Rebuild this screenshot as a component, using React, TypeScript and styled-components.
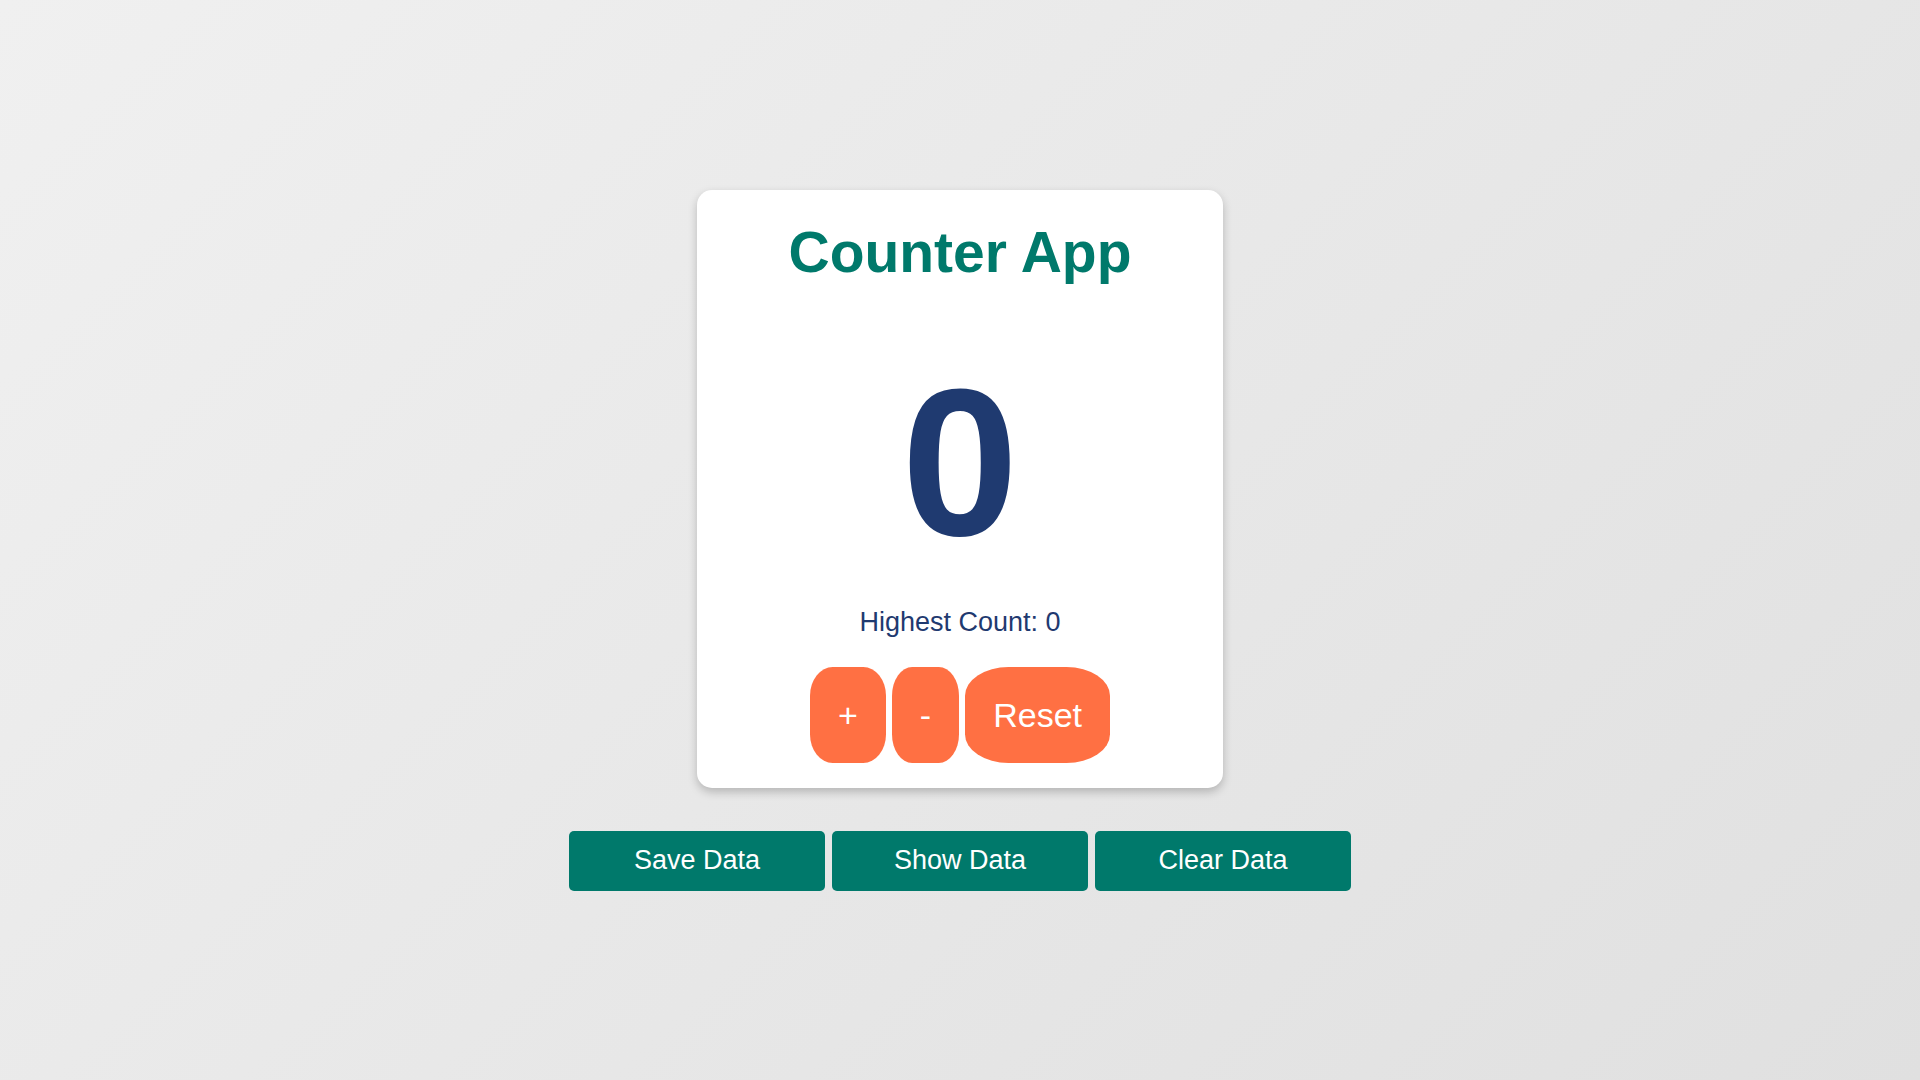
import { FC, useState } from "react";
import styled, { createGlobalStyle } from "styled-components";

const GlobalStyle = createGlobalStyle`
  html, body {
    margin: 0;
    padding: 0;
  }

  body {
    font-family: "Liberation Sans", Arial, sans-serif;
    background: linear-gradient(135deg, #f0f0f0, #e0e0e0);
    min-height: 100vh;
  }
`;

const StyledPage = styled.div`
  height: 100vh;
  display: flex;
  flex-direction: column;
  align-items: center;
  justify-content: center;
`;

const StyledCard = styled.div`
  box-sizing: border-box;
  width: 526px;
  padding: 30px 20px 25px;
  background-color: #ffffff;
  border-radius: 15px;
  box-shadow: 0 4px 10px rgba(0, 0, 0, 0.22);
  display: flex;
  flex-direction: column;
  align-items: center;
  text-align: center;
`;

const StyledTitle = styled.h1`
  margin: 0;
  font-size: 57px;
  line-height: 64px;
  font-weight: bold;
  color: #00796b;
`;

const StyledCount = styled.div`
  margin-top: 50px;
  font-size: 210px;
  line-height: 257px;
  font-weight: bold;
  color: #1f3a70;
`;

const StyledHighest = styled.p`
  margin: 16px 0 0;
  font-size: 27px;
  line-height: 31px;
  color: #1f3a70;
`;

const StyledControls = styled.div`
  margin-top: 29px;
  display: flex;
  gap: 6px;
`;

const StyledCountButton = styled.button`
  padding: 28px;
  border: none;
  border-radius: 30%;
  background-color: #ff7043;
  color: #ffffff;
  font-family: inherit;
  font-size: 34px;
  line-height: 40px;
  cursor: pointer;
`;

const StyledDataBar = styled.div`
  margin-top: 43px;
  display: flex;
  gap: 7px;
`;

const StyledDataButton = styled.button`
  width: 256px;
  height: 60px;
  border: none;
  border-radius: 5px;
  background-color: #00796b;
  color: #ffffff;
  font-family: inherit;
  font-size: 27px;
  cursor: pointer;
`;

const App: FC = () => {
  const [count, setCount] = useState(0);
  const [highest, setHighest] = useState(0);

  const increment = () => {
    const next = count + 1;
    setCount(next);
    if (next > highest) setHighest(next);
  };

  return (
    <>
      <GlobalStyle />
      <StyledPage>
        <StyledCard>
          <StyledTitle>Counter App</StyledTitle>
          <StyledCount>{count}</StyledCount>
          <StyledHighest>Highest Count: {highest}</StyledHighest>
          <StyledControls>
            <StyledCountButton onClick={increment}>+</StyledCountButton>
            <StyledCountButton onClick={() => setCount(count - 1)}>-</StyledCountButton>
            <StyledCountButton onClick={() => setCount(0)}>Reset</StyledCountButton>
          </StyledControls>
        </StyledCard>

        <StyledDataBar>
          <StyledDataButton>Save Data</StyledDataButton>
          <StyledDataButton>Show Data</StyledDataButton>
          <StyledDataButton>Clear Data</StyledDataButton>
        </StyledDataBar>
      </StyledPage>
    </>
  );
};

export default App;
